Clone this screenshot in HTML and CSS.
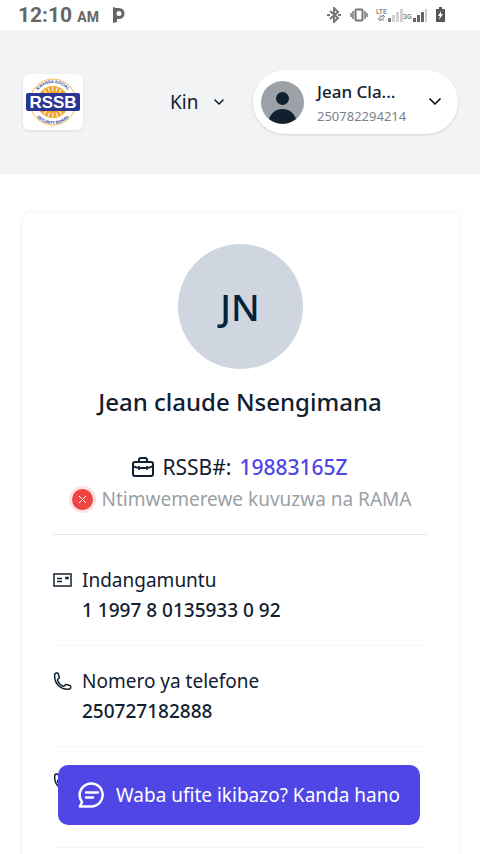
FILE: index.html
```html
<!DOCTYPE html>
<html lang="rw">
<head>
    <meta charset="UTF-8">
    <meta name="viewport" content="width=device-width, initial-scale=1.0">
    <title>RSSB</title>
    <link rel="stylesheet" href="styles.css">
</head>
<body>
    <div class="status-bar">
        <span class="clock">12:10 <small>AM</small></span>
        <svg class="status-app" width="14" height="16" viewBox="0 0 14 16"><path d="M1 0l3 1h3a5.500 5.500 0 0 1 0 11H5v3l-4 1zM7 4a2.500 2.500 0 1 0 0 5a2.500 2.500 0 0 0 0-5z" fill="#666" fill-rule="evenodd"/></svg>
        <div class="status-icons">
            <svg width="14" height="16" viewBox="0 0 14 16" fill="none" stroke="#777" stroke-width="2"><path d="M3 4l8 7-4 4V1l4 4-8 7"/><path d="M0 8h3M11 8h3"/></svg>
            <svg width="18" height="14" viewBox="0 0 18 14" fill="none" stroke="#777"><rect x="5.500" y="1.500" width="7" height="11" rx="1" stroke-width="2"/><path d="M3 3v8M15 3v8M1 5v4M17 5v4" stroke-width="1.500"/></svg>
            <svg class="signal" width="52" height="16" viewBox="0 0 52 16">
                <text x="0" y="7" font-size="7">LTE</text>
                <path d="M4 8v5M2 11l2 3 2-2M7 14V9M5 10l2-2 2 2" fill="none" stroke="#888"/>
                <path d="M12 11h3v4h-3z" fill="#777"/>
                <path d="M16 8h3v7h-3zM20 5h3v10h-3zM24 2h3v13h-3z" fill="#d2d2d2"/>
                <text x="27" y="12" font-size="7">3G</text>
                <path d="M37 11h3v4h-3zM41 8h3v7h-3zM45 5h3v10h-3z" fill="#666"/>
                <path d="M49 2h2v13h-2z" fill="#ccc"/>
            </svg>
            <svg width="9" height="16" viewBox="0 0 9 16"><path d="M3 0h3v2h3v13H0V2h3z" fill="#555"/><path d="M5 4L2 9h2l-1 4 4-6H5z" fill="#fff"/></svg>
        </div>
    </div>

    <header class="header">
        <a href="#" class="logo" aria-label="RSSB">
            <svg width="60" height="56" viewBox="0 0 60 56">
                <defs>
                    <path id="ring-top" d="M11 28a19 19 0 0 1 38 0"/>
                    <path id="ring-bottom" d="M8 28a22 22 0 0 0 44 0"/>
                </defs>
                <circle cx="30" cy="28" r="23" fill="#fff" stroke="#f5b95a"/>
                <circle cx="30" cy="28" r="16" fill="#f6a72b"/>
                <circle cx="30" cy="28" r="13" fill="none" stroke="#fff" stroke-width="4" stroke-dasharray="1 3"/>
                <g font-size="4" font-weight="700" fill="#2b3990">
                    <text text-anchor="middle"><textPath href="#ring-top" startOffset="50%">RWANDA SOCIAL</textPath></text>
                    <text text-anchor="middle"><textPath href="#ring-bottom" startOffset="50%">SECURITY BOARD</textPath></text>
                </g>
                <rect x="3" y="19" width="54" height="18" rx="2" fill="#2b3594"/>
                <text class="logo-name" x="30" y="34" text-anchor="middle">RSSB</text>
            </svg>
        </a>
        <div class="language">
            <select aria-label="Ururimi">
                <option>Kin</option>
            </select>
            <svg width="10" height="6" viewBox="0 0 10 6" fill="none" stroke="#111827" stroke-width="1.500" stroke-linecap="round" stroke-linejoin="round"><path d="M1 1l4 4 4-4"/></svg>
        </div>
        <button type="button" class="account">
            <svg class="account-photo" width="43" height="43" viewBox="0 0 43 43">
                <circle cx="21.500" cy="21.500" r="21.500" fill="#9ba1a6"/>
                <circle cx="21.500" cy="17.500" r="6.500" fill="#11202f"/>
                <path d="M8 38c2-6 7-10 13.500-10S33 32 35 38a21.500 21.500 0 0 1-27 0z" fill="#11202f"/>
            </svg>
            <span class="account-text">
                <span class="account-name">Jean Cla...</span>
                <span class="account-phone">250782294214</span>
            </span>
            <svg width="12" height="8" viewBox="0 0 12 8" fill="none" stroke="#111" stroke-width="1.700" stroke-linecap="round" stroke-linejoin="round"><path d="M1 1l5 5 5-5"/></svg>
        </button>
    </header>

    <main class="card">
        <div class="initials">JN</div>
        <h1>Jean claude Nsengimana</h1>
        <p class="member">
            <svg width="22" height="22" viewBox="0 0 22 22" fill="none" stroke="#11202f" stroke-width="2" stroke-linecap="round" stroke-linejoin="round"><rect x="1" y="6" width="20" height="14" rx="2"/><path d="M7 6V4a2 2 0 0 1 2-2h4a2 2 0 0 1 2 2v2M1 10c3 2 6 2 10 2s7 0 10-2M7 11v2M15 11v2"/></svg>
            <span>RSSB#:</span>
            <strong>19883165Z</strong>
        </p>
        <p class="eligibility">
            <svg width="27" height="27" viewBox="0 0 27 27"><circle cx="13.500" cy="13.500" r="13.500" fill="#fee2e2"/><circle cx="13.500" cy="13.500" r="10.500" fill="#ef4444"/><path d="M10 10l7 7M17 10l-7 7" stroke="#fff"/></svg>
            Ntimwemerewe kuvuzwa na RAMA
        </p>
        <ul class="details">
            <li>
                <svg width="20" height="20" viewBox="0 0 20 20" fill="none" stroke="#11202f" stroke-width="1.500"><path d="M1 4h17v12H1zM4 8.500h5M4 11.500h5"/><path d="M13 7.500h2v1h-2z"/></svg>
                <div>
                    <span>Indangamuntu</span>
                    <strong>1 1997 8 0135933 0 92</strong>
                </div>
            </li>
            <li>
                <svg width="20" height="20" viewBox="0 0 24 24" fill="none" stroke="#11202f" stroke-width="1.800" stroke-linejoin="round"><path d="M2 6.500C2 15 9 22 17.500 22H19a2.200 2.200 0 0 0 2.200-2.200v-1.400c0-.5-.4-1-.9-1.100l-4.400-1.100c-.4-.1-.9.100-1.200.4l-1 1.300c-.2.400-.7.500-1.100.400a12 12 0 0 1-7.200-7.200c-.2-.4 0-.9.400-1.200l1.300-1c.3-.2.500-.7.400-1.100L6.400 3.400c-.1-.5-.6-.9-1.100-.9H4.200A2.200 2.200 0 0 0 2 4.700z"/></svg>
                <div>
                    <span>Nomero ya telefone</span>
                    <strong>250727182888</strong>
                </div>
            </li>
            <li>
                <svg width="20" height="20" viewBox="0 0 24 24" fill="none" stroke="#11202f" stroke-width="1.800" stroke-linejoin="round"><path d="M2 6.500C2 15 9 22 17.500 22H19a2.200 2.200 0 0 0 2.200-2.200v-1.400c0-.5-.4-1-.9-1.100l-4.400-1.100c-.4-.1-.9.100-1.200.4l-1 1.300c-.2.400-.7.500-1.100.400a12 12 0 0 1-7.200-7.200c-.2-.4 0-.9.400-1.200l1.300-1c.3-.2.500-.7.400-1.100L6.400 3.400c-.1-.5-.6-.9-1.100-.9H4.200A2.200 2.200 0 0 0 2 4.700z"/></svg>
            </li>
        </ul>
    </main>

    <button type="button" class="help-button">
        <svg width="26" height="26" viewBox="0 0 26 26" fill="none" stroke="#fff" stroke-width="2.500" stroke-linecap="round" stroke-linejoin="round"><path d="M2 24.500h11A11.500 11.500 0 1 0 4 20z"/><path d="M8 10.500h12M8 15.500h7"/></svg>
        Waba ufite ikibazo? Kanda hano
    </button>
</body>
</html>
```
FILE: styles.css
```css
* {
    box-sizing: border-box;
}
body {
    margin: 0;
    font-family: "Noto Sans", sans-serif;
    color: #11202f;
    background-color: #fff;
    overflow-x: hidden;
}
svg {
    display: block;
    flex-shrink: 0;
}
button, select {
    font-family: inherit;
    color: inherit;
    border: 0;
    cursor: pointer;
}
.status-bar {
    display: flex;
    align-items: center;
    height: 30px;
    padding: 0 35px 0 18px;
    font-family: Roboto, sans-serif;
    color: #666;
}
.clock {
    font-size: 21px;
    font-weight: 700;
}
.clock small {
    font-size: 14px;
}
.status-app {
    margin-left: 13px;
}
.status-icons {
    display: flex;
    align-items: center;
    gap: 9px;
    margin-left: auto;
}
.signal {
    margin: 0 -1px;
    font-family: Roboto, sans-serif;
    fill: #555;
}
.header {
    display: flex;
    align-items: center;
    height: 144px;
    padding: 0 22px 0 23px;
    background-color: #f2f3f5;
}
.logo {
    border-radius: 6px;
    background-color: #fff;
    box-shadow: 0 1px 3px rgba(0, 0, 0, 0.1);
    font-family: "Liberation Sans", sans-serif;
}
.logo-name {
    font-size: 17px;
    font-weight: 700;
    fill: #fff;
}
.language {
    display: flex;
    align-items: center;
    gap: 15px;
    margin-left: auto;
    margin-right: 29px;
}
.language select {
    appearance: none;
    padding: 0;
    background: none;
    font-size: 19px;
}
.account {
    display: flex;
    align-items: center;
    width: 205px;
    height: 64px;
    padding: 0 17px 0 8px;
    border-radius: 32px;
    background-color: #fff;
    box-shadow: 0 1px 3px rgba(0, 0, 0, 0.12);
    text-align: left;
}
.account-text {
    width: 92px;
    margin: 0 auto 0 13px;
    padding-top: 3px;
}
.account-text span {
    display: block;
    line-height: 24px;
}
.account-name {
    font-size: 17px;
    font-weight: 500;
    white-space: nowrap;
}
.account-phone {
    font-size: 13px;
    color: #7b818c;
}
.card {
    margin: 39px 22px 0 23px;
    padding: 31px 31px 20px 30px;
    border-radius: 8px;
    box-shadow: 0 0 6px rgba(0, 0, 0, 0.08);
}
.initials {
    display: flex;
    align-items: center;
    justify-content: center;
    width: 125px;
    height: 125px;
    margin: 0 auto;
    border-radius: 50%;
    background-color: #cfd6e0;
    color: #02233a;
    font-size: 37px;
    font-weight: 500;
}
h1 {
    margin: 16px 0 32px;
    font-size: 24px;
    font-weight: 500;
    line-height: 34px;
    text-align: center;
}
.member, .eligibility {
    display: flex;
    align-items: center;
    justify-content: center;
    height: 32px;
    margin: 0;
    white-space: nowrap;
}
.member {
    font-size: 21px;
    gap: 8px;
}
.member strong {
    font-weight: 500;
    color: #4f46e5;
}
.eligibility {
    gap: 6px;
    font-size: 19px;
    color: #9ba1a6;
}
.details {
    margin: 19px 0 0;
    padding: 10px 0 0;
    border-top: 1px solid #e5e7eb;
    list-style: none;
}
.details li {
    display: flex;
    gap: 9px;
    min-height: 101px;
    padding: 20px 0;
    border-bottom: 1px solid #f5f6f7;
    font-size: 19px;
    line-height: 30px;
}
.details svg {
    margin-top: 5px;
}
.details span, .details strong {
    display: block;
}
.details strong {
    font-weight: 500;
}
.help-button {
    position: fixed;
    right: 60px;
    bottom: 29px;
    left: 58px;
    display: flex;
    align-items: center;
    justify-content: center;
    gap: 12px;
    height: 60px;
    padding: 0;
    border-radius: 10px;
    background-color: #4f46e5;
    color: #fff;
    font-size: 19px;
    white-space: nowrap;
}
```
